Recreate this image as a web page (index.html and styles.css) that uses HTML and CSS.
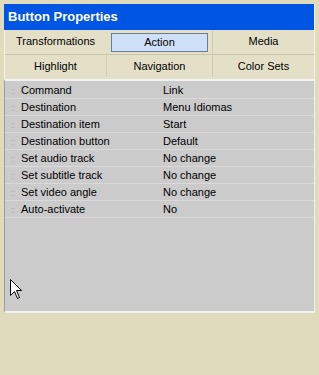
FILE: index.html
```html
<!DOCTYPE html>
<html lang="en">
<head>
    <meta charset="UTF-8">
    <title>Button Properties</title>
    <link rel="stylesheet" href="styles.css">
</head>
<body>
    <div class="panel">
        <div class="title-bar">Button Properties</div>

        <div class="tabs">
            <div class="tab-row">
                <div class="tab">Transformations</div>
                <div class="tab active">Action</div>
                <div class="tab">Media</div>
            </div>
            <div class="tab-row">
                <div class="tab">Highlight</div>
                <div class="tab">Navigation</div>
                <div class="tab">Color Sets</div>
            </div>
        </div>

        <div class="prop-list">
            <div class="prop-row"><span class="prop-name">Command</span><span class="prop-value">Link</span></div>
            <div class="prop-row"><span class="prop-name">Destination</span><span class="prop-value">Menu Idiomas</span></div>
            <div class="prop-row"><span class="prop-name">Destination item</span><span class="prop-value">Start</span></div>
            <div class="prop-row"><span class="prop-name">Destination button</span><span class="prop-value">Default</span></div>
            <div class="prop-row"><span class="prop-name">Set audio track</span><span class="prop-value">No change</span></div>
            <div class="prop-row"><span class="prop-name">Set subtitle track</span><span class="prop-value">No change</span></div>
            <div class="prop-row"><span class="prop-name">Set video angle</span><span class="prop-value">No change</span></div>
            <div class="prop-row"><span class="prop-name">Auto-activate</span><span class="prop-value">No</span></div>

            <!-- mouse pointer -->
            <svg class="cursor" width="13" height="21" viewBox="0 0 13 21">
                <path d="M0.5 0.5 L0.5 16.5 L4.5 12.5 L7.5 19.5 L9.5 18.5 L6.5 11.5 L11.5 11.5 Z" fill="#fff" stroke="#000" stroke-width="1"/>
            </svg>
        </div>
    </div>
</body>
</html>
```

FILE: styles.css
```css
/* Base */
* {
    margin: 0;
    padding: 0;
    box-sizing: border-box;
}
body {
    font-family: "Liberation Sans", Arial, sans-serif;
    font-size: 11px;
    color: #000;
    background-color: #e0dbbd;
}

/* Panel */
.panel {
    margin: 4px 0 0 4px;
    width: 311px;
    border-right: 1px solid #f4f2e8;
}
.title-bar {
    height: 26px;
    line-height: 26px;
    padding-left: 4px;
    background-color: #0055e3;
    color: #fff;
    font-size: 13px;
    font-weight: bold;
}

/* Tabs */
.tabs {
    background-color: #e4e0c8;
    border-left: 1px solid #f4f2e8;
    padding-bottom: 2px;
}
.tab-row {
    display: grid;
    grid-template-columns: 101px 106px 1fr;
    height: 24px;
    align-items: center;
}
.tab-row + .tab-row {
    border-top: 1px solid #c9c5ad;
    height: 23px;
}
.tab {
    text-align: center;
    height: 100%;
    line-height: 22px;
    border-left: 1px solid #d2ceb4;
}
.tab:first-child {
    border-left: none;
}
.tab.active {
    height: 19px;
    line-height: 17px;
    margin: 1px 4px 0 5px;
    background-color: #cde0f7;
    border: 1px solid #6c7c94;
}

/* Property list */
.prop-list {
    position: relative;
    height: 234px;
    background-color: #cbcbcb;
    border-top: 2px solid #f2f2f2;
    border-bottom: 2px solid #f2f2f2;
    border-left: 1px solid #9c9c9c;
    padding-top: 1px;
}
.prop-row {
    display: flex;
    height: 17px;
    line-height: 16px;
    border-bottom: 1px solid #d9d9d9;
}
.prop-name {
    width: 155px;
    padding-left: 16px;
    position: relative;
}
.prop-name::before {
    content: "";
    position: absolute;
    left: 6px;
    top: 7px;
    width: 4px;
    height: 3px;
    border-top: 1px solid #bdbdbd;
    border-bottom: 1px solid #bdbdbd;
}
.prop-value {
    padding-left: 3px;
}
.cursor {
    position: absolute;
    left: 5px;
    top: 198px;
}
```
